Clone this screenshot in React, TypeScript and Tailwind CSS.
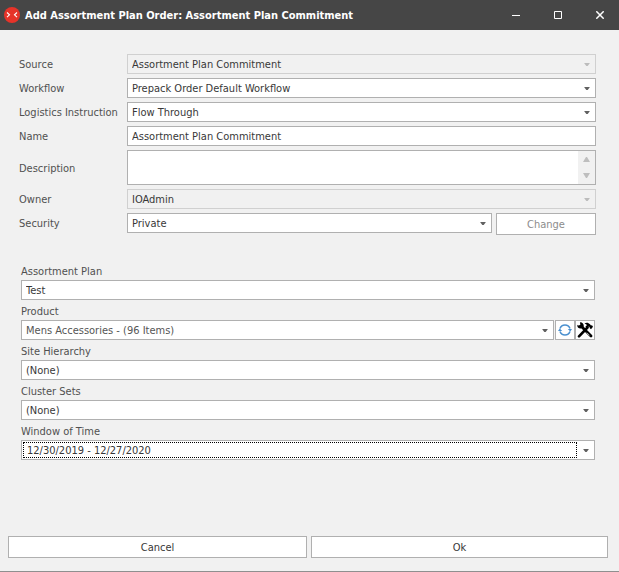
import type { ReactNode } from 'react';

const FIELD =
  'block h-5 w-full appearance-none rounded-none border border-[#b0b0b0] bg-white pl-1 pr-5 text-[11px] leading-4 text-[#383838] outline-none disabled:border-[#d0d0d0] disabled:bg-[#f1f1f1] disabled:opacity-100';

const BUTTON = 'h-[22px] border border-[#b0b0b0] bg-white pt-0.5 text-center text-[11px] leading-4';

function Arrow({ muted }: { muted?: boolean }) {
  return (
    <svg
      viewBox="0 0 6 3"
      className={`pointer-events-none absolute right-1.5 top-[9px] h-[3px] w-1.5 ${muted ? 'text-[#bcbcbc]' : 'text-[#606060]'}`}
      fill="currentColor"
      aria-hidden="true"
    >
      <path d="M.1 0h5.8L3.7 3H2.3z" />
    </svg>
  );
}

interface PickerProps {
  id: string;
  value: string;
  disabled?: boolean;
  focused?: boolean;
  soft?: boolean;
}

function Picker({ id, value, disabled, focused, soft }: PickerProps) {
  return (
    <div className="relative min-w-0 flex-1">
      <select id={id} disabled={disabled} className={`${FIELD} pt-0.5 ${soft ? 'text-[#555555]' : ''} ${focused ? 'indent-px' : ''}`}>
        <option>{value}</option>
      </select>
      {focused && (
        <div className="pointer-events-none absolute bottom-[2px] left-[2px] right-[18px] top-[2px] border border-dotted border-black" />
      )}
      <Arrow muted={disabled} />
    </div>
  );
}

function Row({ id, label, children }: { id: string; label: string; children: ReactNode }) {
  return (
    <div className="flex items-center">
      <label htmlFor={id} className="w-[108px] shrink-0 whitespace-nowrap pt-0.5">
        {label}
      </label>
      <div className="flex min-w-0 flex-1 items-start gap-1">{children}</div>
    </div>
  );
}

function Stack({ id, label, children }: { id: string; label: string; children: ReactNode }) {
  return (
    <div>
      <label htmlFor={id} className="block h-5 pt-1">
        {label}
      </label>
      <div className="flex">{children}</div>
    </div>
  );
}

function TitleBar() {
  return (
    <header className="flex h-[30px] items-center bg-[#464646] pl-1 text-white">
      <svg viewBox="0 0 16 16" className="h-4 w-4 shrink-0" fill="none" aria-hidden="true">
        <circle cx="8" cy="8" r="8" fill="#e63329" />
        <path d="M3 5.5l2.5 2.3L3 10.2M13 5.5l-2.5 2.3L13 10.2" stroke="#fff" strokeWidth="1.1" />
      </svg>
      <h1 className="ml-[5px] min-w-0 flex-1 whitespace-nowrap pt-px font-bold">
        Add Assortment Plan Order: Assortment Plan Commitment
      </h1>
      <div className="-mr-0.5 flex shrink-0">
        <button aria-label="Minimize" className="flex h-[30px] w-[42px] items-center justify-center">
          <svg viewBox="0 0 8 8" className="h-2 w-2" aria-hidden="true">
            <path d="M0 4h8v1H0z" fill="#fff" />
          </svg>
        </button>
        <button aria-label="Maximize" className="flex h-[30px] w-[42px] items-center justify-center">
          <svg viewBox="0 0 8 8" className="h-2 w-2" fill="none" stroke="#fff" aria-hidden="true">
            <path d="M.5 .5h7v7h-7z" />
          </svg>
        </button>
        <button aria-label="Close" className="flex h-[30px] w-[42px] items-center justify-center">
          <svg viewBox="0 0 8 8" className="h-2 w-2" fill="none" stroke="#fff" strokeWidth="1.5" aria-hidden="true">
            <path d="M.3 .3l7.4 7.4M7.7 .3L.3 7.7" />
          </svg>
        </button>
      </div>
    </header>
  );
}

export default function App() {
  return (
    <div className="flex min-h-screen flex-col border-b border-[#8f8f8f] bg-[#f1f1f1] font-['DejaVu_Sans_Condensed','DejaVu_Sans',sans-serif] text-[11px] leading-4 text-[#505050]">
      <TitleBar />
      <form className="flex flex-1 flex-col" onSubmit={(e) => e.preventDefault()}>
        <section className="flex flex-col gap-1 pl-[19px] pr-[23px] pt-6">
          <Row id="source" label="Source">
            <Picker id="source" value="Assortment Plan Commitment" disabled />
          </Row>
          <Row id="workflow" label="Workflow">
            <Picker id="workflow" value="Prepack Order Default Workflow" />
          </Row>
          <Row id="logistics" label="Logistics Instruction">
            <Picker id="logistics" value="Flow Through" />
          </Row>
          <Row id="name" label="Name">
            <input id="name" type="text" defaultValue="Assortment Plan Commitment" className={FIELD} />
          </Row>
          <Row id="description" label="Description">
            <div className="flex h-[35px] flex-1 border border-[#b0b0b0] bg-white">
              <textarea id="description" className="min-w-0 flex-1 resize-none px-1 text-[11px] leading-4 text-[#383838] outline-none" />
              <div className="flex w-[17px] flex-col items-center justify-between bg-[#f1f1f1] py-1.5 text-[#bebebe]">
                <svg viewBox="0 0 7 5" className="h-[5px] w-[7px]" fill="currentColor" aria-hidden="true">
                  <path d="M0 5L3 0h1l3 5z" />
                </svg>
                <svg viewBox="0 0 7 5" className="h-[5px] w-[7px]" fill="currentColor" aria-hidden="true">
                  <path d="M0 0h7L4 5H3z" />
                </svg>
              </div>
            </div>
          </Row>
          <Row id="owner" label="Owner">
            <Picker id="owner" value="IOAdmin" disabled />
          </Row>
          <div className="flex items-start">
            <label htmlFor="security" className="w-[108px] shrink-0 pt-[3px]">
              Security
            </label>
            <div className="flex min-w-0 flex-1 items-start gap-1">
              <Picker id="security" value="Private" />
              <button type="button" disabled className={`${BUTTON} w-[100px] text-[#8c8c8c]`}>
                Change
              </button>
            </div>
          </div>
        </section>

        <section className="flex flex-col pl-[21px] pr-6 pt-[25px]">
          <Stack id="plan" label="Assortment Plan">
            <Picker id="plan" value="Test" />
          </Stack>
          <Stack id="product" label="Product">
            <Picker id="product" value="Mens Accessories - (96 Items)" soft />
            <button type="button" aria-label="Refresh" className="ml-px flex h-5 w-5 items-center justify-center border border-[#b0b0b0] bg-white">
              <svg viewBox="0 0 14 14" className="h-3.5 w-3.5 shrink-0" fill="none" aria-hidden="true">
                <path d="M2 5.6A5.3 5.3 0 0 1 12 5.6M12 8.4A5.3 5.3 0 0 1 2 8.4" stroke="#4a90cf" strokeWidth="1.5" />
                <path d="M9.8 6H14L12.3 8.6zM4.2 8H0L1.7 5.4z" fill="#4a90cf" />
              </svg>
            </button>
            <button type="button" aria-label="Tools" className="flex h-5 w-5 items-center justify-center border border-[#b0b0b0] bg-white">
              <svg viewBox="0 0 16 16" className="h-4 w-4 shrink-0" fill="none" aria-hidden="true">
                <path d="M4.5 4.5L14 14" stroke="#000" strokeWidth="2.8" strokeLinecap="round" />
                <path d="M10.5 5.5L2 14.3" stroke="#000" strokeWidth="2.6" strokeLinecap="round" />
                <path d="M3 .3L3.3 3 1 3.5.2 2.8C0 5 1.5 6.7 4 6.5L6.8 4.5C7 2 5.4.2 3 .3z" fill="#000" />
                <path d="M7.5 1.3C9.5.2 11.5.5 13 2.3l1 1.3 1-.3 1 1.5L14 7.2 12.6 6l.1-1-1.2-.4L10 6.4 8.4 4.7 10 3z" fill="#000" />
                <path d="M9.8 10.7l2.7 2.7" stroke="#fff" strokeWidth=".7" />
              </svg>
            </button>
          </Stack>
          <Stack id="site" label="Site Hierarchy">
            <Picker id="site" value="(None)" />
          </Stack>
          <Stack id="cluster" label="Cluster Sets">
            <Picker id="cluster" value="(None)" />
          </Stack>
          <Stack id="time" label="Window of Time">
            <Picker id="time" value="12/30/2019 - 12/27/2020" focused />
          </Stack>
        </section>

        <footer className="mt-auto grid grid-cols-[299fr_297fr] gap-1 pb-[13px] pl-2 pr-[11px]">
          <button type="button" className={`${BUTTON} text-[#383838]`}>
            Cancel
          </button>
          <button type="submit" className={`${BUTTON} text-[#383838]`}>
            Ok
          </button>
        </footer>
      </form>
    </div>
  );
}
